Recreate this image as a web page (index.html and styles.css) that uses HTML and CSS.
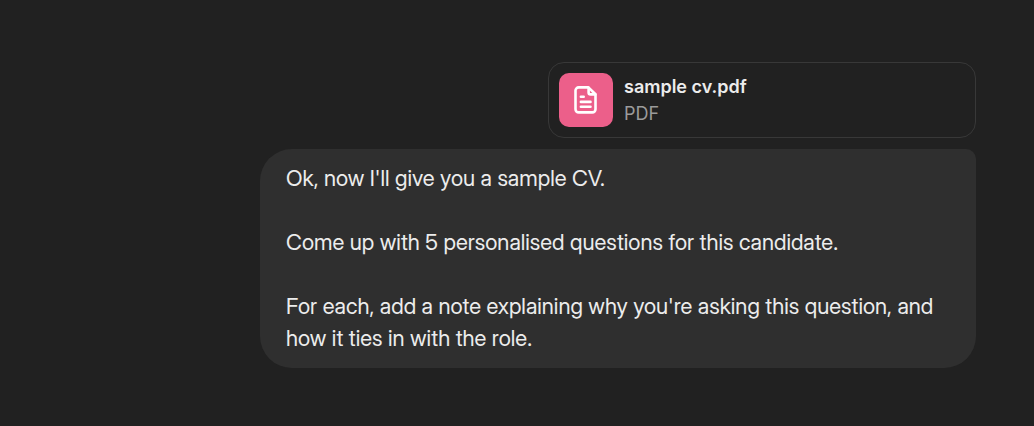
FILE: index.html
```html
<!DOCTYPE html>
<html lang="en">
<head>
<meta charset="utf-8">
<title>Chat</title>
<link rel="stylesheet" href="styles.css">
</head>
<body>
<main class="message">
  <button class="file" type="button">
    <span class="file-icon">
      <svg width="28" height="32" viewBox="0 0 28 32" fill="none" stroke="#fff" stroke-width="2.6" stroke-linecap="round" stroke-linejoin="round" aria-hidden="true">
        <path d="M16.4 3.4H6.7a3.2 3.2 0 0 0-3.2 3.2v18.6a3.2 3.2 0 0 0 3.2 3.2h13.6a3.2 3.2 0 0 0 3.2-3.2V10.2z"/>
        <path d="M16.6 3.8v4.6a2 2 0 0 0 2 2h4.6M8.9 12.8h2.8M8.9 17.9h9.6M8.9 22.7h9.6"/>
      </svg>
    </span>
    <span class="file-info">
      <span class="file-name">sample cv.pdf</span>
      <span class="file-type">PDF</span>
    </span>
  </button>
  <div class="bubble">
    <p>Ok, now I'll give you a sample CV.</p>
    <p>Come up with 5 personalised questions for this candidate.</p>
    <p>For each, add a note explaining why you're asking this question, and how it ties in with the role.</p>
  </div>
</main>
</body>
</html>
```
FILE: styles.css
```css
* { box-sizing: border-box; }
body {
  margin: 0;
  background: #212121;
  color: #ececec;
  font-family: Inter, "Liberation Sans", sans-serif;
}
.message {
  display: flex;
  flex-direction: column;
  align-items: flex-end;
  gap: 11px;
  padding: 62px 58px;
}
.file {
  display: flex;
  align-items: center;
  gap: 11px;
  width: 428px;
  max-width: 100%;
  padding: 10px;
  border: 1px solid #383838;
  border-radius: 16px;
  background: #212121;
  color: inherit;
  font: inherit;
  text-align: left;
}
.file-icon {
  display: grid;
  place-items: center;
  width: 54px;
  height: 54px;
  border-radius: 10px;
  background: #ec5f8a;
}
.file-info { display: flex; flex-direction: column; }
.file-name { font-size: 18px; line-height: 27px; font-weight: 600; }
.file-type { font-size: 18px; line-height: 27px; color: #9b9b9b; }
.bubble {
  display: flex;
  flex-direction: column;
  gap: 32px;
  max-width: 716px;
  padding: 13px 26px 14px;
  border-radius: 32px 10px 32px 32px;
  background: #2f2f2f;
  font-family: "Inter Display", Inter, "Liberation Sans", sans-serif;
  font-size: 22px;
  line-height: 32px;
}
.bubble p { margin: 0; }
```
